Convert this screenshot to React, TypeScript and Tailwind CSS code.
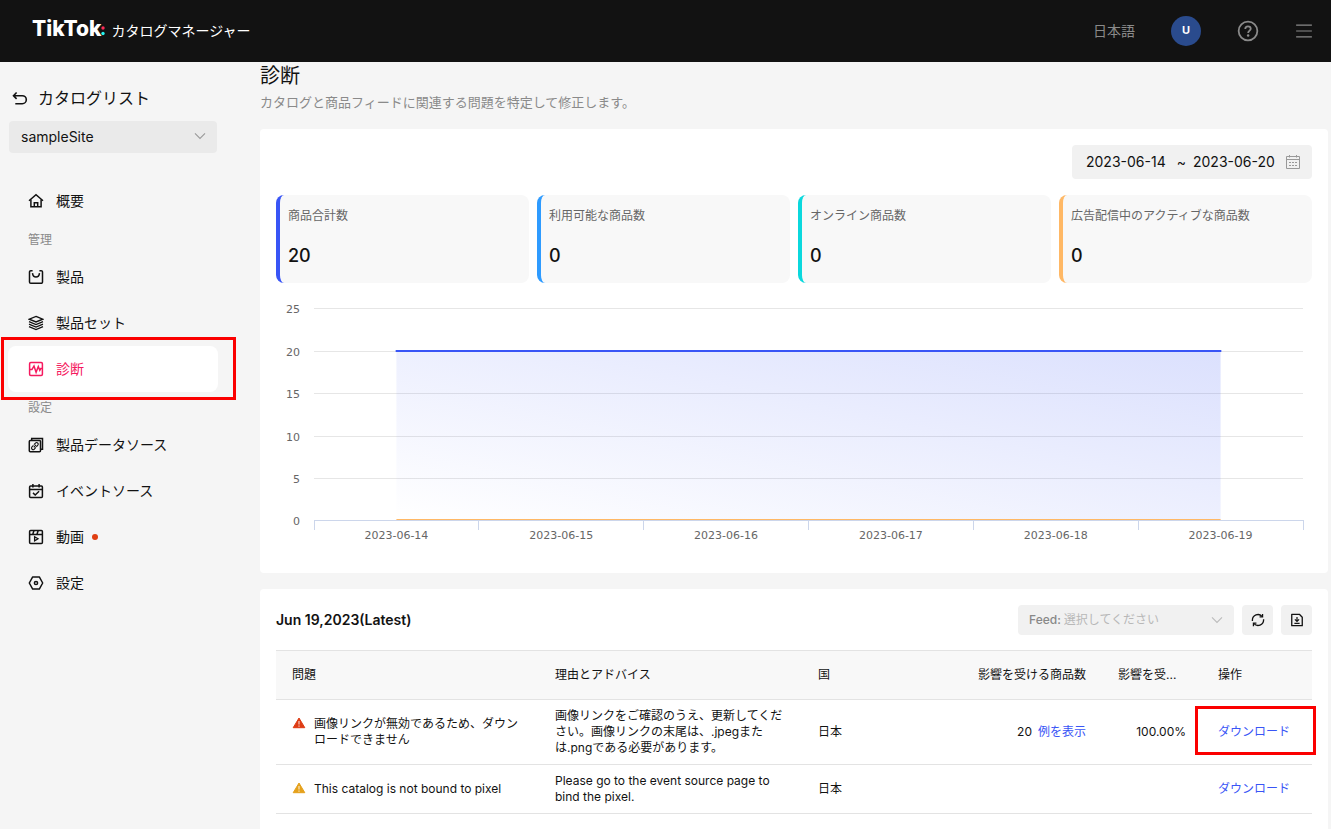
import type { ReactNode } from "react";
import clsx from "clsx";

type IconProps = { children: ReactNode; className?: string };

function Icon({ children, className = "size-4" }: IconProps) {
  return (
    <svg
      viewBox="0 0 16 16"
      className={clsx("shrink-0", className)}
      fill="none"
      stroke="currentColor"
      strokeWidth="1.5"
      aria-hidden="true"
    >
      {children}
    </svg>
  );
}

const icons = {
  home: (
    <Icon>
      <path d="M1 7.8 8 1.8l7 6" />
      <path d="M2.9 6.6v7.2h10.2V6.6" />
      <path d="M6.3 13.8V9.7h3.4v4.1" />
    </Icon>
  ),
  bag: (
    <Icon>
      <path d="M4.6 1.7H2.8a1.3 1.3 0 0 0-1.3 1.3v10a1.3 1.3 0 0 0 1.3 1.3h10.4a1.3 1.3 0 0 0 1.3-1.3V3a1.3 1.3 0 0 0-1.3-1.3h-1.8" />
      <path d="M4.5 4.2C4.8 6.800 6.200 8.100 8 8.100s3.200-1.300 3.500-3.900" />
    </Icon>
  ),
  layers: (
    <Icon>
      <path d="M8 1.400 14.700 4.200 8 7 1.300 4.200z" strokeWidth="1.400" />
      <path d="M1 6.600 8 9.500l7-2.900M1 9.100 8 12l7-2.900M1 11.600l7 2.900 7-2.900" strokeWidth="1.300" />
    </Icon>
  ),
  pulse: (
    <Icon>
      <rect x="1.600" y="1.600" width="12.800" height="12.800" rx="1.200" />
      <path d="M1.700 8.600h2.200L6 5l2.100 6.200 2.200-5.700 1.500 3.800 1-1.700h1.500" />
    </Icon>
  ),
  source: (
    <Icon>
      <path d="M3.700 3.200V1.500h10.800v10.800h-1.700" />
      <rect x="1.300" y="3.500" width="11.200" height="11.200" rx="1" />
      <g transform="rotate(-48 6.900 9.100)">
        <path d="M6.500 7.500H4.300a1.600 1.600 0 0 0 0 3.200h2.200M7.300 7.500h2.200a1.600 1.600 0 0 1 0 3.200H7.300M5.300 9.100h3.200" strokeWidth="1.100" />
      </g>
    </Icon>
  ),
  event: (
    <Icon>
      <rect x="1.600" y="2.900" width="12.800" height="11.500" rx="1" />
      <path d="M1.600 6.400h12.800M4.900.9v3.500M11.100.9v3.500" />
      <path d="m5 9.900 2.200 2.100 3.900-3.700" />
    </Icon>
  ),
  video: (
    <Icon>
      <rect x="1.600" y="1.600" width="12.800" height="12.800" rx="1" />
      <path d="M1.600 5.400h12.800M6 1.600 4.700 5.400M10.200 1.600 8.900 5.400" />
      <path d="M6.600 7.800v4L10 9.800z" strokeWidth="1.300" />
    </Icon>
  ),
  settings: (
    <Icon>
      <path d="M4.700 1.900h6.600L14.700 8l-3.400 6.100H4.700L1.300 8z" strokeLinejoin="round" />
      <circle cx="8" cy="8" r="1.600" />
    </Icon>
  ),
  chevron: (
    <Icon className="size-3">
      <path d="m1.300 4.500 6.700 6.700 6.700-6.700" strokeWidth="1.400" />
    </Icon>
  ),
};

type NavItem = { label: string; icon: ReactNode; active?: boolean; dot?: boolean };

const navGroups: { title?: string; items: NavItem[] }[] = [
  { items: [{ label: "概要", icon: icons.home }] },
  {
    title: "管理",
    items: [
      { label: "製品", icon: icons.bag },
      { label: "製品セット", icon: icons.layers },
      { label: "診断", icon: icons.pulse, active: true },
    ],
  },
  {
    title: "設定",
    items: [
      { label: "製品データソース", icon: icons.source },
      { label: "イベントソース", icon: icons.event },
      { label: "動画", icon: icons.video, dot: true },
      { label: "設定", icon: icons.settings },
    ],
  },
];

const stats = [
  { label: "商品合計数", value: "20", border: "border-[#3955f6]" },
  { label: "利用可能な商品数", value: "0", border: "border-[#2e9bff]" },
  { label: "オンライン商品数", value: "0", border: "border-[#0bd8dd]" },
  { label: "広告配信中のアクティブな商品数", value: "0", border: "border-[#ffb865]" },
];

const days = ["2023-06-14", "2023-06-15", "2023-06-16", "2023-06-17", "2023-06-18", "2023-06-19"];

const yTicks = [
  { value: 25, y: 0.5 },
  { value: 20, y: 43.5 },
  { value: 15, y: 85.5 },
  { value: 10, y: 128.5 },
  { value: 5, y: 170.5 },
  { value: 0, y: 212.5 },
];

function Header() {
  return (
    <header className="flex h-[62px] items-center bg-[#121212] pr-[18px] pb-px pl-8 text-sm text-white">
      <div className="flex items-center">
        <span className="-mt-1 text-[21px] leading-6 font-extrabold">TikTok</span>
        <svg viewBox="0 0 4 10" className="mr-0.5 h-2.5 w-1" aria-hidden="true">
          <circle cx="2" cy="2" r="1.700" fill="#fe2c55" />
          <circle cx="2" cy="7.500" r="1.700" fill="#25f4ee" />
        </svg>
        <span className="ml-1">カタログマネージャー</span>
      </div>
      <div className="ml-auto flex items-center gap-9 text-[#8a8a8a]">
        <button type="button">日本語</button>
        <button
          type="button"
          className="flex size-[30px] items-center justify-center rounded-full bg-[#2a4b8d] text-[11px] font-bold text-white"
        >
          U
        </button>
        <button type="button" aria-label="ヘルプ">
          <Icon className="size-[22px]">
            <circle cx="8" cy="8" r="6.800" strokeWidth="1.300" />
            <path d="M6 6.600C6 5.400 6.800 4.600 8 4.600s2 .8 2 1.800c0 1.300-1.900 1.500-1.900 3.100" strokeWidth="1.300" />
            <circle cx="8.100" cy="11.300" r="0.900" fill="currentColor" stroke="none" />
          </Icon>
        </button>
        <button type="button" aria-label="メニュー">
          <Icon className="size-[18px]">
            <path d="M1 2.700h14M1 8h14M1 13.300h14" strokeWidth="1.100" />
          </Icon>
        </button>
      </div>
    </header>
  );
}

function Sidebar() {
  return (
    <aside className="w-[260px] shrink-0 pt-5 pl-2">
      <a href="#catalogs" className="flex h-8 items-center gap-2.5 pl-1 text-base">
        <Icon>
          <path d="M4.600 2.500 1.500 5.700l3.100 3.200M1.500 5.700h8.800a4 4 0 0 1 0 8H3.300" strokeWidth="1.600" />
        </Icon>
        カタログリスト
      </a>
      <div className="relative mt-[7px] ml-px w-52">
        <select
          aria-label="カタログ"
          className="h-8 w-full appearance-none rounded-sm bg-[#eaeaea] px-3 text-sm"
        >
          <option>sampleSite</option>
        </select>
        <span className="pointer-events-none absolute inset-y-0 right-[11px] flex items-center pb-0.5 text-[#999]">
          {icons.chevron}
        </span>
      </div>
      <nav className="mt-[25px] w-[210px]">
        {navGroups.map((group, index) => (
          <div key={index}>
            {group.title && (
              <p className="flex h-[30px] items-center pt-0.5 pl-5 text-xs text-[#8a8a8a]">{group.title}</p>
            )}
            {group.items.map((item) => (
              <div key={item.label} className="relative">
                <a
                  href="#nav"
                  className={clsx(
                    "flex h-[46px] items-center gap-3 rounded-lg pl-5 text-sm",
                    item.active && "bg-white text-[#f5195f]"
                  )}
                >
                  {item.icon}
                  {item.label}
                  {item.dot && <span className="-ml-1 size-1.5 rounded-full bg-[#e03e12]" />}
                </a>
                {item.active && (
                  <div className="pointer-events-none absolute -top-[9px] -right-[18px] -bottom-2 -left-[7px] border-[3px] border-[#fb0000]" />
                )}
              </div>
            ))}
          </div>
        ))}
      </nav>
    </aside>
  );
}

function Chart() {
  return (
    <div className="mt-[25px] mr-[9px] ml-[38px] h-[249px]">
      <svg
        className="h-full w-full overflow-visible font-['DejaVu_Sans',sans-serif] text-[11px]"
        role="img"
        aria-label="商品数の推移"
      >
        <defs>
          <linearGradient id="area" x1="0" y1="1" x2="1" y2="0">
            <stop offset="0" stopColor="#3955f6" stopOpacity="0" />
            <stop offset="1" stopColor="#3955f6" stopOpacity="0.180" />
          </linearGradient>
        </defs>
        {yTicks.map((tick) => (
          <g key={tick.value}>
            <line x1="0" x2="100%" y1={tick.y} y2={tick.y} stroke={tick.value ? "#e6e6e6" : "#ccd6eb"} />
            <text x="-14" y={tick.y + 4} textAnchor="end" fill="#666">
              {tick.value}
            </text>
          </g>
        ))}
        <rect x="8.333%" y="43" width="83.333%" height="169" fill="url(#area)" />
        <line x1="8.333%" x2="91.667%" y1="211.5" y2="211.5" stroke="#ffb865" />
        <line x1="8.333%" x2="91.667%" y1="43" y2="43" stroke="#3955f6" strokeWidth="2" strokeLinecap="round" />
        {[...days, "end"].map((day, index) => {
          const x = `${(index * 100) / 6}%`;
          return (
            <line key={day} x1={x} x2={x} y1="212" y2="222" stroke="#ccd6eb" shapeRendering="crispEdges" />
          );
        })}
        {days.map((day, index) => (
          <text key={day} x={`${((index + 0.5) * 100) / 6}%`} y="231" textAnchor="middle" fill="#666">
            {day}
          </text>
        ))}
      </svg>
    </div>
  );
}

function Overview() {
  return (
    <section className="rounded bg-white p-4">
      <div className="ml-auto flex h-[34px] w-60 items-center rounded bg-[#f1f1f1] pr-[11px] pl-3.5">
        <input aria-label="開始日" defaultValue="2023-06-14" className="w-[84px] bg-transparent text-sm" />
        <span className="flex-1 text-center text-sm">~</span>
        <input aria-label="終了日" defaultValue="2023-06-20" className="mr-2 w-[84px] bg-transparent text-sm" />
        <Icon className="size-4 text-[#999]">
          <path d="M1.500 2.500h13v12h-13zM1.500 5.500h13M4.500 1v2.500M11.500 1v2.500" strokeWidth="1" />
          <path d="M4 8.500h2M7 8.500h2M10 8.500h2M4 11.500h2M7 11.500h2M10 11.500h2" strokeWidth="1" />
        </Icon>
      </div>

      <div className="mt-4 grid grid-cols-4 gap-2">
        {stats.map((stat) => (
          <div key={stat.label} className={clsx("h-[88px] rounded-lg border-l-4 bg-[#f8f8f8] px-2 pt-[13px]", stat.border)}>
            <p className="text-xs leading-4 text-[#666]">{stat.label}</p>
            <p className="mt-5 text-lg leading-6 font-medium">{stat.value}</p>
          </div>
        ))}
      </div>

      <Chart />
    </section>
  );
}

function WarningIcon({ className }: { className: string }) {
  return (
    <svg viewBox="0 0 14 14" className={clsx("size-3.5 shrink-0", className)} aria-hidden="true">
      <path d="M7 2 12.800 11.700H1.200z" fill="currentColor" stroke="currentColor" strokeLinejoin="round" />
      <path d="M7 5v3.500M7 9.500v1.200" stroke="white" strokeOpacity="0.800" strokeWidth="1.100" />
    </svg>
  );
}

const rows = [
  {
    color: "text-[#de3c14]",
    issue: "画像リンクが無効であるため、ダウンロードできません",
    advice: "画像リンクをご確認のうえ、更新してください。画像リンクの末尾は、.jpegまたは.pngである必要があります。",
    country: "日本",
    count: "20",
    ratio: "100.00%",
    marked: true,
  },
  {
    color: "text-[#e5a11c]",
    issue: "This catalog is not bound to pixel",
    advice: "Please go to the event source page to bind the pixel.",
    country: "日本",
  },
];

function Issues() {
  return (
    <section className="flex-1 rounded-t bg-white p-4 pb-8">
      <div className="flex items-center gap-2">
        <h2 className="mr-auto text-sm font-semibold">Jun 19,2023(Latest)</h2>
        <div className="relative flex h-[30px] w-[216px] items-center rounded bg-[#f1f1f1] pl-[11px] text-xs">
          <label htmlFor="feed" className="shrink-0 font-medium text-[#888]">
            Feed:
          </label>
          <select id="feed" className="h-full w-full appearance-none bg-transparent pl-[3px] text-[#b8b8b8]">
            <option>選択してください</option>
          </select>
          <span className="pointer-events-none absolute inset-y-0 right-[11px] flex items-center text-[#bbb]">
            {icons.chevron}
          </span>
        </div>
        <button
          type="button"
          aria-label="更新"
          className="flex h-[30px] w-[31px] items-center justify-center rounded bg-[#f1f1f1]"
        >
          <Icon className="size-3.5">
            <path d="M1.600 9V8a6.300 6.300 0 0 1 11-4.100M14.400 7v1a6.300 6.300 0 0 1-11 4.100" strokeWidth="1.500" />
            <path d="M13.200 1v3.400H9.800M2.800 15v-3.400h3.400" strokeWidth="1.500" />
          </Icon>
        </button>
        <button
          type="button"
          aria-label="エクスポート"
          className="flex h-[30px] w-[31px] items-center justify-center rounded bg-[#f1f1f1]"
        >
          <Icon className="size-3.5">
            <path d="M2 1.500h8.700l3.300 3.400v9.600H2z" strokeLinejoin="round" strokeWidth="1.500" />
            <path d="M8 4.500v5M5.600 7.300 8 9.700l2.400-2.400M5 11.800h6" strokeWidth="1.400" />
          </Icon>
        </button>
      </div>

      <table className="mt-[15px] w-full table-fixed border-separate border-spacing-0 text-left text-xs leading-4">
        <colgroup>
          <col />
          <col />
          <col className="w-[150px]" />
          <col className="w-[150px]" />
          <col className="w-[100px]" />
          <col className="w-[110px]" />
        </colgroup>
        <thead>
          <tr className="h-[50px] bg-[#f8f8f8] *:border-y *:border-[#e3e3e3] *:px-4 *:font-normal">
            <th>問題</th>
            <th>理由とアドバイス</th>
            <th>国</th>
            <th className="text-right whitespace-nowrap">影響を受ける商品数</th>
            <th className="whitespace-nowrap">影響を受...</th>
            <th>操作</th>
          </tr>
        </thead>
        <tbody>
          {rows.map((row) => (
            <tr key={row.issue} className="*:border-b *:border-[#e3e3e3] *:px-4 *:py-2">
              <td>
                <div className="flex gap-2">
                  <WarningIcon className={row.color} />
                  {row.issue}
                </div>
              </td>
              <td>{row.advice}</td>
              <td>{row.country}</td>
              <td className="text-right">
                {row.count}
                {row.count && (
                  <a href="#examples" className="ml-1.5 text-[#3955f6]">
                    例を表示
                  </a>
                )}
              </td>
              <td className="text-right">{row.ratio}</td>
              <td className="relative">
                <a href="#download" className="text-[#3955f6]">
                  ダウンロード
                </a>
                {row.marked && (
                  <div className="pointer-events-none absolute top-1.5 -right-1 bottom-[9px] -left-[7px] border-[3px] border-[#fb0000]" />
                )}
              </td>
            </tr>
          ))}
        </tbody>
      </table>
    </section>
  );
}

export default function App() {
  return (
    <div lang="ja" className="flex min-h-screen flex-col bg-[#f5f5f5] font-['Inter','Noto_Sans_CJK_JP',sans-serif] text-[#121212]">
      <Header />
      <div className="flex flex-1">
        <Sidebar />
        <main className="flex min-w-0 flex-1 flex-col pr-[3px]">
          <h1 className="text-xl leading-7">診断</h1>
          <p className="mt-0.5 mb-[17px] text-[13px] leading-5 text-[#8a8a8a]">
            カタログと商品フィードに関連する問題を特定して修正します。
          </p>
          <div className="flex flex-1 flex-col gap-4">
            <Overview />
            <Issues />
          </div>
        </main>
      </div>
    </div>
  );
}
